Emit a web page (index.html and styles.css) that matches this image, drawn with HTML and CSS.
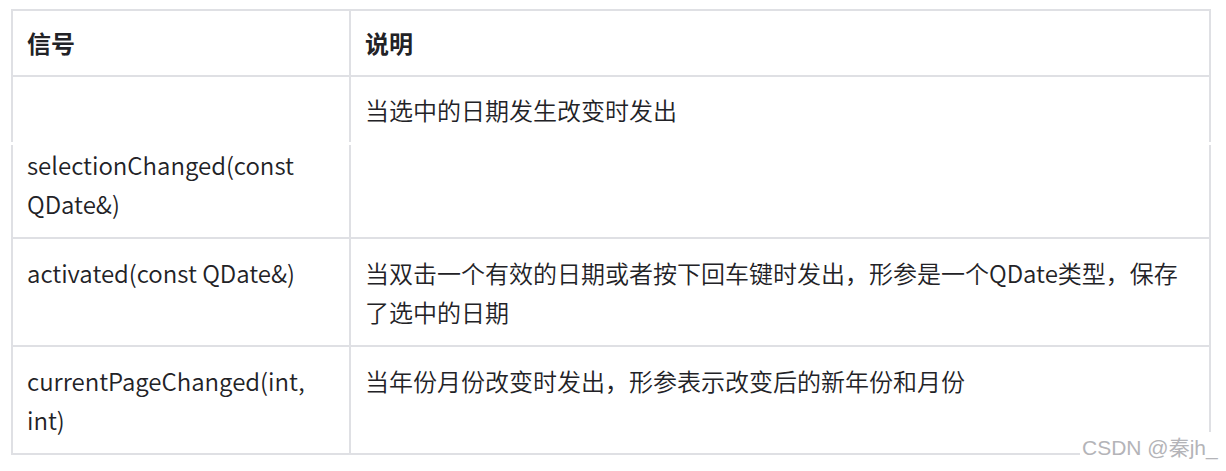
FILE: index.html
```html
<!DOCTYPE html>
<html lang="zh-CN">
<head>
<meta charset="utf-8">
<title>QCalendarWidget 信号</title>
<link rel="stylesheet" href="styles.css">
</head>
<body>
<div class="page">
  <div class="table">
    <div class="row head">
      <div class="cell">信号</div>
      <div class="cell">说明</div>
    </div>
    <div class="row split-top">
      <div class="cell"></div>
      <div class="cell">当选中的日期发生改变时发出</div>
    </div>
    <div class="seam"></div>
    <div class="row split-bottom">
      <div class="cell">selectionChanged(const QDate&amp;)</div>
      <div class="cell"></div>
    </div>
    <div class="row">
      <div class="cell">activated(const QDate&amp;)</div>
      <div class="cell">当双击一个有效的日期或者按下回车键时发出，形参是一个QDate类型，保存了选中的日期</div>
    </div>
    <div class="row">
      <div class="cell">currentPageChanged(int, int)</div>
      <div class="cell">当年份月份改变时发出，形参表示改变后的新年份和月份</div>
    </div>
  </div>
  <div class="watermark">CSDN @秦jh_</div>
</div>
</body>
</html>
```

FILE: styles.css
```css
html, body {
  margin: 0;
  padding: 0;
  background: #ffffff;
}

.page {
  position: relative;
  width: 1226px;
  height: 471px;
  overflow: hidden;
  padding: 9px 0 0 11px;
  box-sizing: border-box;
}

.table {
  width: 1200px;
  font-family: "Noto Sans CJK SC", "Noto Sans", sans-serif;
  font-size: 24px;
  font-weight: 350;
  line-height: 39px;
  color: #222226;
}

.row {
  display: grid;
  grid-template-columns: 338px 1fr;
  border-right: 2px solid #dfe0e4;
  border-bottom: 2px solid #dfe0e4;
}

.cell {
  border-left: 2px solid #dfe0e4;
  padding: 14px 14px;
  min-width: 0;
}

.head {
  border-top: 2px solid #dfe0e4;
  font-weight: 700;
}

.head .cell {
  padding: 12px 14px 13px;
}

.split-top {
  border-bottom: none;
  height: 65px;
}

.split-top .cell {
  padding: 13px 14px;
}

.seam {
  height: 3px;
}

.split-bottom .cell {
  padding: 0 14px 14px;
}

.watermark {
  position: absolute;
  right: 0;
  bottom: 0;
  width: 146px;
  height: 39px;
  background: #ffffff;
  box-sizing: border-box;
  padding: 4px 0 0 2px;
  font-family: "Liberation Sans", Arial, "Noto Sans CJK SC", sans-serif;
  font-size: 21px;
  line-height: 24px;
  color: #b4b4b8;
  white-space: nowrap;
}
```
